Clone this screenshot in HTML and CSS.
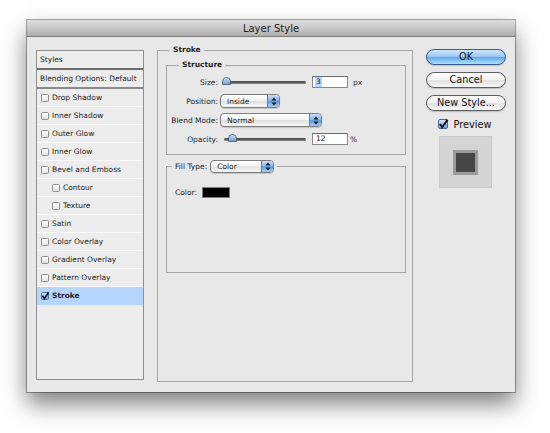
FILE: index.html
```html
<!DOCTYPE html>
<html>
<head>
<meta charset="utf-8">
<link rel="stylesheet" href="styles.css">
</head>
<body>
<div class="canvas">
  <div class="window">
    <div class="titlebar">Layer Style</div>
    <div class="body">
      <div class="list">
        <div class="row head">Styles</div>
        <div class="row blend">Blending Options: Default</div>
        <div class="row"><span class="cb"></span>Drop Shadow</div>
        <div class="row"><span class="cb"></span>Inner Shadow</div>
        <div class="row"><span class="cb"></span>Outer Glow</div>
        <div class="row"><span class="cb"></span>Inner Glow</div>
        <div class="row"><span class="cb"></span>Bevel and Emboss</div>
        <div class="row sub"><span class="cb"></span>Contour</div>
        <div class="row sub"><span class="cb"></span>Texture</div>
        <div class="row"><span class="cb"></span>Satin</div>
        <div class="row"><span class="cb"></span>Color Overlay</div>
        <div class="row"><span class="cb"></span>Gradient Overlay</div>
        <div class="row"><span class="cb"></span>Pattern Overlay</div>
        <div class="row sel"><span class="cb on"><svg viewBox="0 0 8 8" width="8" height="8"><path d="M1.4 3.8 L3.3 6.6 L7.6 0.2" fill="none" stroke="#111" stroke-width="1.6"/></svg></span><b>Stroke</b></div>
      </div>

      <fieldset class="group stroke">
        <legend>Stroke</legend>
        <fieldset class="group structure">
          <legend>Structure</legend>
          <div class="form">
            <span class="lbl">Size:</span>
            <div class="ctl">
              <div class="slider"><span class="thumb" style="left:0px"><svg viewBox="0 0 9 8" width="9" height="8"><defs><linearGradient id="tg" x1="0" y1="0" x2="0" y2="1"><stop offset="0" stop-color="#d6e6f8"/><stop offset="1" stop-color="#6d9ad0"/></linearGradient></defs><path d="M0.5 7.5 V4.5 A4 4 0 0 1 8.5 4.5 V7.5 Z" fill="url(#tg)" stroke="#44546a" stroke-width="0.8"/></svg></span></div>
              <span class="input"><span class="hl">3</span></span>
              <span class="unit">px</span>
            </div>
            <span class="lbl">Position:</span>
            <div class="ctl">
              <div class="select w-pos"><span class="val">Inside</span><span class="arrows"><svg viewBox="0 0 6 9" width="6" height="9"><path d="M3 0.5 L5.5 3.5 H0.5 Z M3 8.5 L5.5 5.5 H0.5 Z" fill="#1a1a1a"/></svg></span></div>
            </div>
            <span class="lbl">Blend Mode:</span>
            <div class="ctl">
              <div class="select w-blend"><span class="val">Normal</span><span class="arrows"><svg viewBox="0 0 6 9" width="6" height="9"><path d="M3 0.5 L5.5 3.5 H0.5 Z M3 8.5 L5.5 5.5 H0.5 Z" fill="#1a1a1a"/></svg></span></div>
            </div>
            <span class="lbl">Opacity:</span>
            <div class="ctl">
              <div class="slider"><span class="thumb" style="left:6px"><svg viewBox="0 0 9 8" width="9" height="8"><path d="M0.5 7.5 V4.5 A4 4 0 0 1 8.5 4.5 V7.5 Z" fill="url(#tg)" stroke="#44546a" stroke-width="0.8"/></svg></span></div>
              <span class="input">12</span>
              <span class="unit pct">%</span>
            </div>
          </div>
        </fieldset>

        <fieldset class="group fill">
          <legend><span class="fl">Fill Type:</span><span class="select w-fill"><span class="val">Color</span><span class="arrows"><svg viewBox="0 0 6 9" width="6" height="9"><path d="M3 0.5 L5.5 3.5 H0.5 Z M3 8.5 L5.5 5.5 H0.5 Z" fill="#1a1a1a"/></svg></span></span></legend>
          <div class="colorrow"><span>Color:</span><span class="swatch"></span></div>
        </fieldset>
      </fieldset>

      <div class="actions">
        <div class="btn ok">OK</div>
        <div class="btn">Cancel</div>
        <div class="btn">New Style...</div>
        <div class="preview"><span class="pcb"><svg viewBox="0 0 10 10" width="10" height="10"><path d="M2 5 L4.2 8.4 L9.6 0.6" fill="none" stroke="#111" stroke-width="1.9"/></svg></span>Preview</div>
        <div class="thumbbox"><span class="inner"></span></div>
      </div>
    </div>
  </div>
</div>
</body>
</html>
```
FILE: styles.css
```css
* { box-sizing: border-box; }
html, body { margin: 0; background: #ffffff; }
body {
  font-family: "DejaVu Sans", "Liberation Sans", sans-serif;
  font-size: 7.5px;
  color: #1e1e1e;
}
.canvas { padding: 20px 0 0 27px; height: 433px; }

.window {
  width: 488px;
  height: 372px;
  background: #e8e8e8;
  box-shadow: 0 0 0 1px rgba(0,0,0,0.33), 0 12px 22px rgba(0,0,0,0.5);
  display: flex;
  flex-direction: column;
}
.titlebar {
  height: 17px;
  background: linear-gradient(#dedede, #c4c4c4 60%, #adadad);
  border-bottom: 1px solid #7a7a7a;
  font-size: 10px;
  line-height: 17px;
  text-align: center;
  color: #222;
}
.body {
  flex: 1;
  display: flex;
  gap: 13px;
  padding: 13px 9px 12px 9px;
}

/* styles list */
.list {
  width: 108px;
  background: #ededed;
  border: 1px solid #8f8f8f;
  display: flex;
  flex-direction: column;
}
.row {
  display: flex;
  align-items: center;
  gap: 3px;
  height: 18px;
  flex: none;
  padding-left: 4px;
  border-bottom: 1px solid #f9f9f9;
  white-space: nowrap;
  color: #222;
}
.row.head { height: 19px; padding-left: 3px; border-bottom: 2px solid #6b6b6b; }
.row.blend { height: 19px; padding-left: 3px; border-bottom: 2px solid #8a8a8a; }
.row.sub { padding-left: 15px; }
.row.sel { background: #b6d5fc; border-bottom-color: #b6d5fc; }
.row b { font-weight: bold; }
.cb {
  width: 8px;
  height: 8px;
  flex: none;
  border: 1px solid #8c8c8c;
  border-radius: 1.5px;
  background: linear-gradient(#ffffff, #e2e2e2);
  display: flex;
}
.cb.on {
  border-color: #4d6f9c;
  background: linear-gradient(#cfe3fa, #6fa6e6);
  overflow: visible;
}
.cb svg { margin: -1px 0 0 -1px; overflow: visible; }

/* group boxes */
.group {
  margin: 0;
  min-width: 0;
  border: 1px solid #a6a6a6;
}
.group > legend {
  font-weight: bold;
  padding: 0 3px;
  line-height: 10px;
}
.group.stroke {
  width: 256px;
  flex: none;
  margin: -5px 0 -2px 0;
  padding: 5px 6px 0 8px;
}
.group.stroke > legend { margin-left: 4px; }
.group.structure { padding: 4px 6px 7px 4px; }
.group.structure > legend { margin-left: 8px; }

.form {
  display: grid;
  grid-template-columns: 47px auto;
  grid-auto-rows: 16px;
  column-gap: 3px;
  row-gap: 3px;
  align-items: center;
}
.lbl { text-align: right; white-space: nowrap; }
.ctl { display: flex; align-items: center; }

.slider {
  width: 84px;
  height: 16px;
  margin-left: 1px;
  position: relative;
  display: flex;
  align-items: center;
}
.slider::before {
  content: "";
  display: block;
  height: 3px;
  width: 82px;
  margin-left: 2px;
  border-radius: 2px;
  background: linear-gradient(#3d3d3d, #8a8a8a);
}
.thumb {
  position: absolute;
  top: 3px;
  width: 9px;
  height: 8px;
  display: flex;
}
.input {
  width: 36px;
  height: 12px;
  margin-left: 6px;
  background: #fff;
  border: 1px solid #8a8a8a;
  border-top-color: #6a6a6a;
  padding-left: 3px;
  line-height: 10px;
  display: flex;
  align-items: center;
}
.hl { background: #b5d5fd; padding: 0 1px; margin-left: -1px; }
.unit { margin-left: 5px; color: #333; }
.unit.pct { margin-left: 2px; }

.select {
  height: 14px;
  border: 1px solid #7c7c7c;
  border-radius: 4px;
  background: linear-gradient(#ffffff, #f2f2f2 48%, #e0e0e0 52%, #f6f6f6);
  display: flex;
  align-items: center;
  padding-left: 6px;
  overflow: hidden;
  font-weight: normal;
  color: #1e1e1e;
  box-shadow: 0 1px 1px rgba(0,0,0,0.15);
}
.select .val { flex: 1; }
.select .arrows {
  width: 12px;
  align-self: stretch;
  border-left: 1px solid #5c7fb0;
  background: linear-gradient(#c6def8, #86b6ec 48%, #5b97e0 52%, #a6cef6);
  display: flex;
  align-items: center;
  justify-content: center;
}
.w-pos { width: 60px; margin-left: -1px; }
.w-blend { width: 102px; margin-left: -1px; }
.w-fill { width: 64px; margin-left: 3px; height: 13px; }

.group.fill {
  margin-top: 5px;
  padding: 14px 8px 74px 8px;
}
.group.fill > legend {
  display: flex;
  align-items: center;
  margin-left: -3px;
  font-weight: normal;
  line-height: 13px;
}
.colorrow { display: flex; align-items: center; gap: 5px; height: 11px; }
.swatch {
  width: 28px;
  height: 11px;
  background: #000;
  border: 1px solid #7e7e7e;
}

/* actions */
.actions {
  width: 80px;
  flex: none;
  display: flex;
  flex-direction: column;
  align-items: center;
  margin-top: -1px;
}
.btn {
  width: 80px;
  height: 16px;
  border-radius: 8px;
  border: 1px solid #5e5e5e;
  background: linear-gradient(#ffffff, #f3f3f3 48%, #e1e1e1 52%, #f9f9f9);
  font-size: 9.7px;
  line-height: 14px;
  text-align: center;
  color: #111;
  box-shadow: 0 1px 1px rgba(0,0,0,0.18);
  margin-bottom: 7px;
}
.btn.ok {
  border-color: #3a5d8d;
  background: linear-gradient(#d2e8fc, #98c7f4 48%, #62a7ec 52%, #ade0fd);
}
.preview {
  height: 12px;
  display: flex;
  align-items: center;
  gap: 5px;
  font-size: 9.8px;
  color: #111;
  margin-left: -2px;
}
.pcb {
  width: 10px;
  height: 10px;
  border: 1px solid #48699a;
  border-radius: 2px;
  background: linear-gradient(#d2e5fb, #6aa3e6);
  display: flex;
}
.pcb svg { margin: -1px 0 0 -1px; overflow: visible; }
.thumbbox {
  width: 53px;
  height: 52px;
  margin-top: 6px;
  margin-left: -1px;
  background: #d4d4d4;
  border: 1px solid #cbcbcb;
  display: flex;
  align-items: center;
  justify-content: center;
}
.inner {
  width: 25px;
  height: 25px;
  background: #464646;
  border: 3px solid #9b9b9b;
}
```
